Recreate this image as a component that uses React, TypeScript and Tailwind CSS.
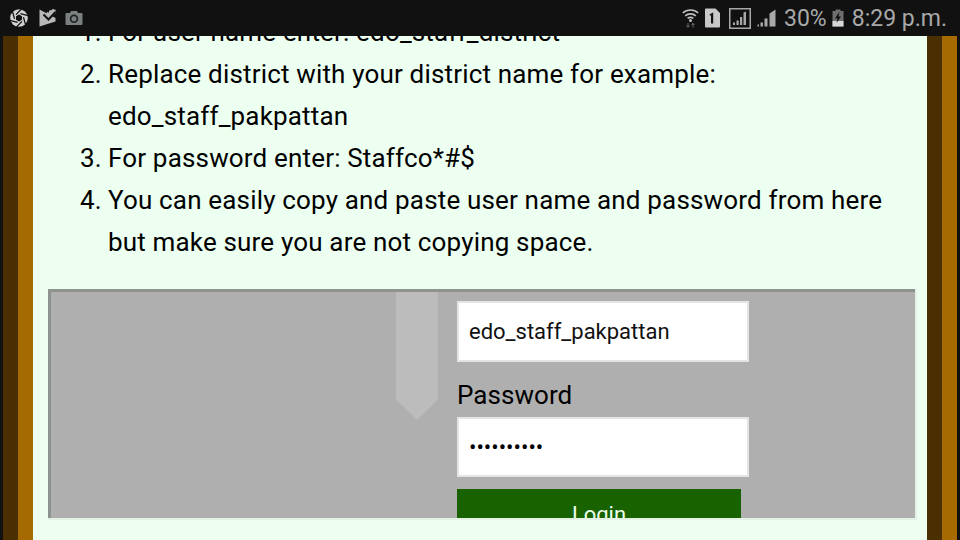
const steps: { n: number; lines: string[] }[] = [
  { n: 1, lines: ['For user name enter: edo_staff_district'] },
  { n: 2, lines: ['Replace district with your district name for example:', 'edo_staff_pakpattan'] },
  { n: 3, lines: ['For password enter: Staffco*#$'] },
  { n: 4, lines: ['You can easily copy and paste user name and password from here', 'but make sure you are not copying space.'] },
]

function Shutter() {
  return (
    <svg width="18" height="18" viewBox="0 0 18 18" fill="none">
      <circle cx="9" cy="9" r="8.8" fill="#d2d2d2" />
      <g stroke="#111" strokeWidth="1.3">
        {[0, 60, 120, 180, 240, 300].map((a) => (
          <path key={a} d="M6 5.6L11.5 0" transform={`rotate(${a} 9 9)`} />
        ))}
      </g>
      <path d="M9 5.600L12 7.300V10.700L9 12.400L6 10.700V7.300Z" fill="#111" />
    </svg>
  )
}

function Flag() {
  return (
    <svg width="17" height="18" viewBox="0 0 17 18" fill="none">
      <path d="M0.500 0.500L16.500 9V12.500L0.500 17.500Z" fill="#b8b8b8" />
      <path d="M10 1.500L16.500 0.500V4.500L10.500 9.500Z" fill="#b8b8b8" />
      <path d="M4.500 5.500L9.500 10.500L16.500 3" stroke="#111" strokeWidth="2" />
      <path d="M8 3.500L10 5.500L15 0.500" stroke="#b8b8b8" strokeWidth="2.400" />
    </svg>
  )
}

function Camera() {
  return (
    <svg width="18" height="16" viewBox="0 0 18 16" fill="none">
      <path d="M1.500 3H5L6 1H12L13 3H16.500A1 1 0 0 1 17.500 4V14A1 1 0 0 1 16.500 15H1.500A1 1 0 0 1 0.500 14V4A1 1 0 0 1 1.500 3Z" fill="#7b7f7f" />
      <circle cx="9" cy="8.800" r="3.400" stroke="#1d2222" strokeWidth="1.700" />
    </svg>
  )
}

function WifiIcon() {
  return (
    <svg width="17" height="20" viewBox="0 0 17 20" fill="none">
      <g stroke="#c0c0c0" strokeWidth="1.600">
        <path d="M0.800 5C5 1 12 1 16.200 5" />
        <path d="M3.200 7.800C6 5.200 11 5.200 13.800 7.800" />
        <path d="M5.600 10.400C7.200 9.200 9.800 9.200 11.400 10.400" />
      </g>
      <circle cx="8.500" cy="12.400" r="1.500" fill="#c0c0c0" />
      <path d="M6 15V19M4.500 17.500L6 19.300L7.500 17.500" stroke="#6e6e6e" strokeWidth="1" />
      <path d="M11 19.500V15.500M9.500 17L11 15.300L12.500 17" stroke="#6e6e6e" strokeWidth="1" />
    </svg>
  )
}

function SimIcon() {
  return (
    <svg width="15" height="20" viewBox="0 0 15 20" fill="none">
      <path d="M1 0.500H10.500L15 5V18.500A1 1 0 0 1 14 19.500H1A1 1 0 0 1 0 18.500V1.500A1 1 0 0 1 1 0.500Z" fill="#c8c8c8" />
      <path d="M4.800 6.200L8.200 4.400V15.500H6V7.300L4.800 7.800Z" fill="#111" />
    </svg>
  )
}

function DataSignal() {
  return (
    <svg width="22" height="21" viewBox="0 0 22 21" fill="none">
      <rect x="0.750" y="0.750" width="20.500" height="19.500" stroke="#a8a8a8" strokeWidth="1.500" />
      <path d="M4 14.500h2v2.500H4zM7.500 12.500h2.200V17H7.500zM11 9h2.200v8H11zM14.500 4.500L17 3.500V17h-2.500z" fill="#a8a8a8" />
    </svg>
  )
}

function Signal() {
  return (
    <svg width="19" height="18" viewBox="0 0 19 18" fill="none">
      <path d="M0.500 15.500h1.500V17.500H0.500zM3.500 13.500h2.500V17.500H3.500zM7.500 9.500H10.500V17.500H7.500zM12.500 4.500L18.500 0.500V17.500H12.500z" fill="#a8a8a8" />
    </svg>
  )
}

function Battery() {
  return (
    <svg width="12" height="18" viewBox="0 0 12 18" fill="none">
      <path d="M3.500 0.500H8.500V2H11.500V17.500H0.500V2H3.500Z" fill="#6e6e6e" />
      <path d="M0.500 12H11.500V17.500H0.500Z" fill="#d8d8d8" />
      <path d="M7.500 2.500L3 9.500H5.500L4.500 14L9 7.500H6.500Z" fill="#111" />
    </svg>
  )
}

function StatusBar() {
  return (
    <div className="absolute inset-x-0 top-0 z-10 flex h-9 items-center justify-between bg-[#111111] pl-[10px] pr-[13px]">
      <div className="flex items-center">
        <Shutter />
        <span className="ml-[11px] flex"><Flag /></span>
        <span className="ml-[9px] flex"><Camera /></span>
      </div>
      <div className="flex items-center text-[23px] text-[#a9a9a9]">
        <WifiIcon />
        <span className="ml-[6px] flex"><SimIcon /></span>
        <span className="ml-[9px] flex"><DataSignal /></span>
        <span className="ml-[6px] flex"><Signal /></span>
        <span className="ml-[8px] leading-none">30%</span>
        <span className="ml-[5px] flex"><Battery /></span>
        <span className="ml-[8px] leading-none">8:29 p.m.</span>
      </div>
    </div>
  )
}

function Frame() {
  return (
    <div className="flex w-[33px] shrink-0">
      <div className="w-[3px] bg-[#111111]" />
      <div className="w-[15px] bg-[#4a3000]" />
      <div className="w-[15px] bg-[#a56a00]" />
    </div>
  )
}

export default function App() {
  return (
    <div className="relative flex h-[540px] w-[960px] overflow-hidden bg-[#ecfff0] font-['Roboto',sans-serif] text-black">
      <StatusBar />
      <Frame />
      <main className="min-w-0 flex-1 pl-[15px] pr-[10px]">
        <ol className="mt-[11px] pl-[60px]">
          {steps.map((step) => (
            <li key={step.n} className="relative text-[26px] leading-[42px] tracking-[0.17px]">
              <span className="absolute left-[-28px]">{step.n}.</span>
              {step.lines.map((line) => (
                <div key={line}>{line}</div>
              ))}
            </li>
          ))}
        </ol>
        <section className="mt-[26px] h-[231px] border-b-2 border-r-2 border-[#e4f2e6]">
          <div className="flex h-full overflow-hidden border-l-[3px] border-t-[3px] border-[#8f938f] bg-[#afafaf]">
            <div className="ml-[345px] h-[128px] w-[42px] bg-[#bcbcbc] [clip-path:polygon(0_0,100%_0,100%_84%,50%_100%,0_84%)]" />
            <div className="ml-[19px] mt-[9px] w-[292px]">
              <div className="flex h-[61px] items-center border-2 border-[#e4e4e4] bg-white pl-[10px] text-[22px] text-[#111]">edo_staff_pakpattan</div>
              <div className="mt-[17px] text-[26px] leading-[32px] tracking-[0.05px]">Password</div>
              <div className="mt-[6px] flex h-[60px] items-center border-2 border-[#e4e4e4] bg-white pl-[10px] text-[22px]">••••••••••</div>
              <div className="mt-[12px] flex h-[50px] w-[284px] items-start justify-center bg-[#186300] pt-[10px] text-[22px] leading-[32px] text-[#ecffec]">Login</div>
            </div>
          </div>
        </section>
      </main>
      <div className="flex w-[33px] shrink-0 flex-row-reverse">
        <div className="w-[3px] bg-[#111111]" />
        <div className="w-[15px] bg-[#a56a00]" />
        <div className="w-[15px] bg-[#4a3000]" />
      </div>
    </div>
  )
}
